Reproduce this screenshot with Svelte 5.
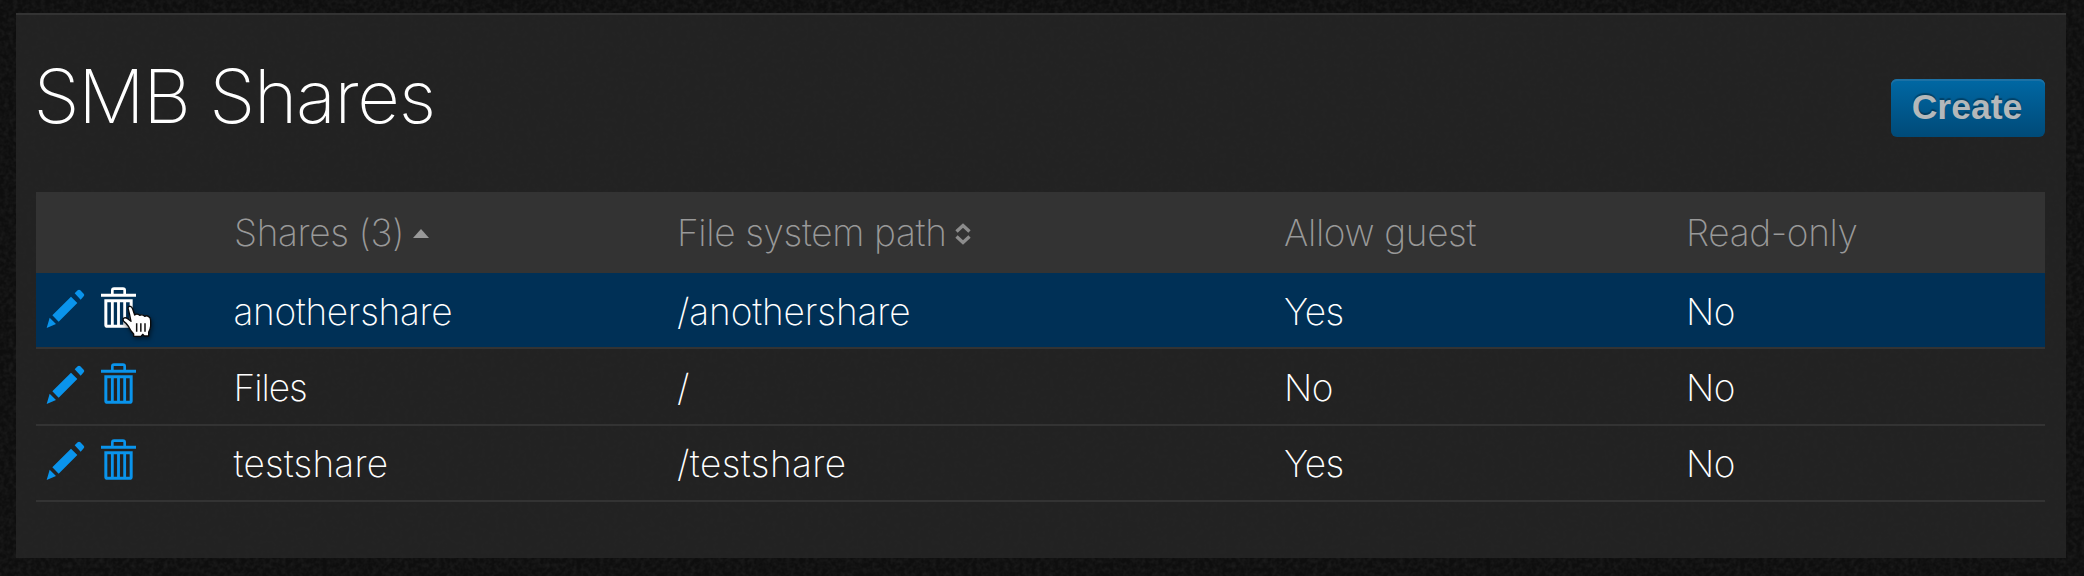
<script>
  const shares = [
    { name: 'anothershare', path: '/anothershare', guest: 'Yes', readonly: 'No', active: true, track: [-0.32, -0.12] },
    { name: 'Files', path: '/', guest: 'No', readonly: 'No', active: false, track: [-1, 0] },
    { name: 'testshare', path: '/testshare', guest: 'Yes', readonly: 'No', active: false, track: [0.2, 0.42] }
  ];
</script>

<main>
  <svg class="grain" width="2084" height="576" aria-hidden="true">
    <filter id="grain" x="0" y="0" width="100%" height="100%">
      <feTurbulence type="fractalNoise" baseFrequency="0.22" numOctaves="2" seed="4" />
      <feColorMatrix values="0 0 0 0 1  0 0 0 0 1  0 0 0 0 1  0.1 0 0 0 -0.035" />
    </filter>
    <rect width="2084" height="576" filter="url(#grain)" />
  </svg>
  <section class="panel">
    <header>
      <h1>SMB Shares</h1>
      <button class="create">Create</button>
    </header>

    <div class="table">
      <div class="row head">
        <span></span>
        <span class="cell"><span>Shares (3)</span>
          <svg class="asc" viewBox="0 0 16 9" width="16" height="9"><path d="M8 0 16 9H0z" fill="#999" /></svg>
        </span>
        <span class="cell"><span>File system path</span>
          <svg class="both" viewBox="0 0 16 22" width="16" height="22">
            <path d="M1.5 8.5 8 2.5 14.5 8.5M1.5 13.5 8 19.500 14.500 13.500" fill="none" stroke="#8c8c8c" stroke-width="3.4" />
          </svg>
        </span>
        <span class="guest">Allow guest</span>
        <span class="ro">Read-only</span>
      </div>
      {#each shares as s}
        <div class="row" class:active={s.active}>
          <span class="actions">
            <svg class="pencil" viewBox="48 60 117 129" width="39" height="43" fill="currentColor">
              <path d="M50 186 59 155 78 174zM67 148 123 92 142 111 86 167zM134 82 143 73Q147 70 151 73L161 83Q165 87 161 91L152 101z" />
            </svg>
            <svg class="trash" viewBox="210 60 111 129" width="37" height="43" fill="none" stroke="currentColor">
              <path d="M247 85V73Q247 68 252 68H279Q284 68 284 73V85" stroke-width="8" />
              <path d="M213 87.500H318" stroke-width="9" />
              <path d="M227.500 104.500H303.500V177Q303.500 181 299.500 181H231.500Q227.500 181 227.500 177z" stroke-width="9" />
              <path d="M247 104V180M265.500 104V180M284 104V180" stroke-width="8.500" />
            </svg>
            {#if s.active}
              <svg class="cursor" viewBox="270 111 102 111" width="34" height="37">
                <path
                  d="M294 126Q295 120 301 121Q306 122 308 129L314 147Q321 141 329 148Q337 144 344 151Q351 147 356 152Q362 155 362 164V180Q361 190 356 198V210H343L338 205L333 211H311V204Q302 195 296 182Q291 173 282 167Q277 161 281 157Q286 153 294 159L303 166Q299 145 294 126z"
                  fill="#fff" stroke="#0a0a0a" stroke-width="4" stroke-linejoin="round" />
                <path d="M320 172V197M332.500 172V197M345 172V197" stroke="#111" stroke-width="4.500" />
              </svg>
            {/if}
          </span>
          <span class="name" style="letter-spacing: {s.track[0]}px">{s.name}</span>
          <span style="letter-spacing: {s.track[1]}px">{s.path}</span>
          <span class="guest">{s.guest}</span>
          <span class="ro">{s.readonly}</span>
        </div>
      {/each}
    </div>
  </section>
</main>

<style>
  :global(body) { margin: 0; background: #101010; }
  main {
    position: relative;
    box-sizing: border-box;
    height: 576px;
    padding: 13px 18px 18px 16px;
    background: #0e0e0e;
    font-family: Inter, 'Liberation Sans', sans-serif;
    overflow: hidden;
  }
  .grain {
    position: absolute;
    left: 0;
    top: 0;
  }
  .panel {
    position: relative;
    box-sizing: border-box;
    height: 545px;
    padding: 0 21px 0 20px;
    border-top: 2px solid #333;
    background: rgba(38, 38, 38, 0.85);
  }
  header {
    display: flex;
    justify-content: space-between;
    align-items: flex-start;
    height: 177px;
  }
  h1 {
    margin: 36px 0 0 -2.5px;
    color: #fff;
    font-size: 74px;
    line-height: 90px;
    font-weight: 165;
    letter-spacing: -1.3px;
    white-space: nowrap;
  }
  .create {
    box-sizing: border-box;
    width: 154px;
    height: 58px;
    margin: 64px 0 0;
    padding: 0 2px 2px 0;
    border: 0;
    border-radius: 6px;
    background: linear-gradient(#0068a4, #004a78);
    box-shadow: inset 0 2px 0 #1c71a5;
    color: #b4b8ba;
    font: bold 35.500px/54px 'Liberation Sans', Arial, sans-serif;
    text-shadow: 0 -2px 1px rgba(0, 0, 0, 0.3);
  }
  .row {
    display: grid;
    grid-template-columns: 198px 443px 607px 402px 1fr;
    align-items: center;
    box-sizing: border-box;
    height: 76.300px;
    border-bottom: 2px solid #333;
    color: #fff;
    font-size: 37px;
    font-weight: 240;
    line-height: 45px;
    white-space: nowrap;
  }
  .row > span:not(.actions) { padding-top: 2px; }
  .guest, .ro { letter-spacing: -0.6px; }
  .name { margin-left: -0.5px; }
  .head {
    height: 81px;
    border: 0;
    background: #333;
    color: #999;
    font-weight: 150;
  }
  .head > span:not(.actions) { padding-top: 0; letter-spacing: -0.35px; }
  .cell { display: flex; align-items: center; }
  .asc { margin: 2px 0 0 9px; }
  .both { margin: 3px 0 0 8px; }
  .active { background: #003056; }
  .actions {
    position: relative;
    display: flex;
    gap: 15px;
    padding: 0 0 5px 10px;
    margin-top: -1px;
    color: #0a94ec;
  }
  .active .trash { color: #fff; }
  .cursor {
    position: absolute;
    left: 84px;
    top: 17px;
    filter: drop-shadow(1px 2px 2px rgba(0, 0, 0, 0.5));
  }
</style>
